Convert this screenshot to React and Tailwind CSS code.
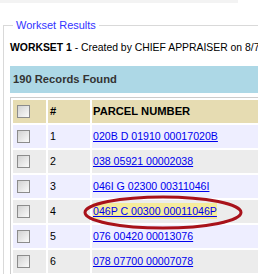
import React from 'react'

const rows = [
    { n: 1, parcel: '020B D 01910 00017020B' },
    { n: 2, parcel: '038 05921 00002038' },
    { n: 3, parcel: '046I G 02300 00311046I' },
    { n: 4, parcel: '046P C 00300 00011046P', marked: true },
    { n: 5, parcel: '076 00420 00013076' },
    { n: 6, parcel: '078 07700 00007078' },
]

const Checkbox = () => (
    <div className="w-[13px] h-[13px] border border-[#8c8c8c] bg-gradient-to-br from-[#d2d2d2] to-[#fbfbfb]" />
)

const App = () => {
    return (
        <div className="relative w-[258px] h-[274px] overflow-hidden bg-white font-['Liberation_Sans',Arial,sans-serif] text-black">
            <div className="h-[3px] w-[238px] bg-[#f3f3f3]" />
            <fieldset className="ml-[3px] mt-[16px] w-[320px] border border-[#d9d9d9] px-[6px] pb-4">
                <legend className="ml-[3px] px-[3px] text-[11px] leading-[13px] text-[#3333ff]">Workset Results</legend>
                <p className="mt-[9px] text-[10.4px] leading-[14px] whitespace-nowrap">
                    <b>WORKSET 1</b> - Created by CHIEF APPRAISER on 8/7
                </p>
                <div className="mt-[11px] h-[27px] flex items-center bg-[#add8e6] pl-[3px] text-[11.2px] font-bold text-[#333]">
                    190 Records Found
                </div>
                <table className="mt-[4px] w-full border border-[#cccccc] border-separate border-spacing-[2px]">
                    <thead>
                        <tr className="h-[23px] bg-[#e6dcb2] text-[11.2px] font-bold text-left">
                            <th className="w-[33px] pl-[4px]"><Checkbox /></th>
                            <th className="w-[42px] pl-[2px]">#</th>
                            <th className="pl-[1px]">PARCEL NUMBER</th>
                        </tr>
                    </thead>
                    <tbody className="text-[10.6px]">
                        {rows.map((r) => (
                            <tr key={r.n} className={`h-[23px] ${r.n % 2 ? 'bg-[#eeeeff]' : 'bg-[#ececec]'}`}>
                                <td className="pl-[4px]"><Checkbox /></td>
                                <td className="pl-[2px]">{r.n}</td>
                                <td className="pl-[1px]">
                                    <a href="#" className={`text-[#0000ee] underline ${r.marked ? 'bg-[#f5eb9c] py-[2px]' : ''}`}>
                                        {r.parcel}
                                    </a>
                                </td>
                            </tr>
                        ))}
                    </tbody>
                </table>
            </fieldset>
            <svg className="absolute left-[82px] top-[195px]" width="162" height="36" viewBox="0 0 162 36">
                <ellipse cx="81" cy="17.5" rx="78" ry="15.5" fill="none" stroke="#a8121a" strokeWidth="3" />
            </svg>
        </div>
    )
}

export default App
